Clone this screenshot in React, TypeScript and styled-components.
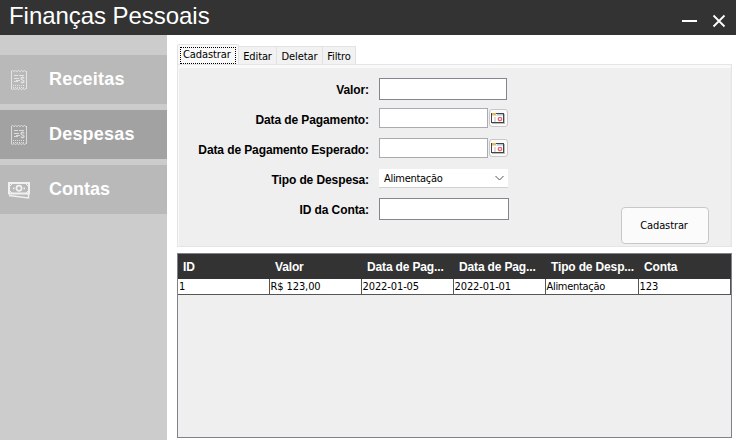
import React from "react";
import styled, { createGlobalStyle } from "styled-components";

const Global = createGlobalStyle`
  * { box-sizing: border-box; }
  body { margin: 0; background: #fff; overflow: hidden; }
`;
const arial = `"Liberation Sans", Arial, sans-serif`;
const tahoma = `"DejaVu Sans Condensed", "DejaVu Sans", Tahoma, sans-serif`;

const Window = styled.div`
  width: 736px;
  height: 440px;
  display: flex;
  flex-direction: column;
  font-family: ${tahoma};
  font-size: 11px;
  color: #000;
  white-space: nowrap;
`;
const TitleBar = styled.header`
  height: 35px;
  flex: none;
  display: flex;
  justify-content: space-between;
  padding: 0 10px 0 9px;
  background: #333;
`;
const Title = styled.h1`
  margin: 0;
  font: 400 24px/32px ${arial};
  letter-spacing: -0.05px;
  color: #fff;
`;
const Controls = styled.div`
  display: flex;
  gap: 14px;
  padding-top: 13px;
`;
const Body = styled.div`
  flex: 1;
  min-height: 0;
  display: flex;
`;
const Sidebar = styled.nav`
  width: 167px;
  flex: none;
  display: flex;
  flex-direction: column;
  gap: 6px;
  padding-top: 20px;
  background: #ccc;
`;
const NavItem = styled.a<{ $active?: boolean }>`
  height: 49px;
  display: flex;
  align-items: center;
  background: ${(p) => (p.$active ? "#a2a2a2" : "#b9b9b9")};
  color: #fff;
  font: 700 18px/22px ${arial};
`;
const NavIcon = styled.span`
  width: 49px;
  padding: 1px 0 0 8px;
  svg { display: block; }
`;
const NavText = styled.span<{ $spacing?: string }>`
  padding-bottom: 2px;
  letter-spacing: ${(p) => p.$spacing ?? "0.2px"};
`;
const Main = styled.main`
  flex: 1;
  min-width: 0;
  padding: 9px 4px 2px 10px;
  display: flex;
  flex-direction: column;
`;
const Tabs = styled.div`
  height: 20px;
  flex: none;
  display: flex;
  align-items: flex-end;
`;
const Tab = styled.div<{ $w: number }>`
  width: ${(p) => p.$w}px;
  height: 18px;
  border: 1px solid #e3e3e3;
  border-left: 0;
  border-bottom: 0;
  background: #f2f2f2;
  text-align: center;
  line-height: 19px;
  letter-spacing: -0.1px;
`;
const ActiveTab = styled.div`
  width: 62px;
  height: 20px;
  padding: 2px;
  border: 1px solid #e3e3e3;
  border-bottom: 0;
  border-radius: 2px 2px 0 0;
  background: #f9f9f9;
`;
const Focus = styled.div`
  height: 17px;
  width: 56px;
  padding-left: 2px;
  border: 1px dotted #000;
  line-height: 14px;
  letter-spacing: -0.1px;
`;
const Pane = styled.section`
  height: 183px;
  flex: none;
  display: flex;
  border: 1px solid #e5e5e5;
  background: #efefef;
  box-shadow: inset 0 3px #f9f9f9, inset 1px 0 #f9f9f9, inset -1px 0 #ededed;
`;
const Form = styled.form`
  padding-top: 9px;
  flex: 1;
`;
const Row = styled.div`
  height: 30px;
  display: grid;
  grid-template-columns: 191px 1fr;
  column-gap: 10px;
`;
const Label = styled.label`
  text-align: right;
  font: 700 12px/33px ${arial};
  letter-spacing: -0.1px;
`;
const Controlset = styled.div`
  display: flex;
  gap: 1px;
  padding-top: 4px;
`;
const Input = styled.input<{ $w: number; $soft?: boolean }>`
  width: ${(p) => p.$w}px;
  height: ${(p) => (p.$soft ? 20 : 22)}px;
  padding: 0 4px;
  border: 1px solid ${(p) => (p.$soft ? "#aaaab0" : "#83858f")};
  border-radius: 0;
  background: #fff;
  font: inherit;
`;
const DateButton = styled.button`
  width: 19px;
  height: 18px;
  margin-top: 1px;
  padding: 3px 0 0 1px;
  display: flex;
  align-items: flex-start;
  border: 1px solid #c8c8c8;
  border-radius: 3px;
  background: #fbfbfb;
  svg { display: block; flex: none; }
`;
const Combo = styled.div`
  width: 129px;
  height: 19px;
  margin-top: 1px;
  padding: 0 4px 0 5px;
  display: flex;
  align-items: center;
  justify-content: space-between;
  border-bottom: 1px solid #d2d2d2;
  background: #fff;
  letter-spacing: -0.3px;
`;
const Submit = styled.button`
  width: 88px;
  height: 37px;
  align-self: flex-end;
  margin: 0 22px 2px 0;
  padding: 0 2px 0 0;
  border: 1px solid #c8c8c8;
  border-radius: 4px;
  background: #fbfbfb;
  color: #000;
  font: 11px ${tahoma};
  letter-spacing: -0.1px;
`;
const TableBox = styled.div`
  flex: 1;
  margin-top: 6px;
  border: 1px solid #7f818b;
  background: #efefef;
`;
const Table = styled.table`
  width: 553px;
  table-layout: fixed;
  border-collapse: separate;
  border-spacing: 0;
`;
const Th = styled.th<{ $w: number }>`
  width: ${(p) => p.$w}px;
  height: 25px;
  padding: 1px 0 0 5px;
  background: #333;
  color: #fff;
  text-align: left;
  font: 700 12px/20px ${arial};
  letter-spacing: -0.15px;
`;
const Td = styled.td`
  height: 16px;
  padding: 0 0 0 1px;
  border-right: 1px solid #555;
  border-bottom: 1px solid #555;
  background: #fff;
  line-height: 15px;
  letter-spacing: -0.1px;
  &:nth-child(n + 2) { padding-left: 0.5px; }
  &:nth-child(5) { letter-spacing: -0.3px; }
`;

const ReceiptIcon = () => (
  <svg width="22" height="22" viewBox="0 0 22 22" fill="none" stroke="#fff" opacity=".62">
    <path d="M3.5 2v18M18.5 2v18" />
    <path d="M3 2.5l1.5-1 1.5 1 1.5-1 1.5 1 1.5-1 1.5 1 1.5-1 1.5 1 1.5-1 1.5 1M3 19.5l1.5 1 1.5-1 1.5 1 1.5-1 1.5 1 1.5-1 1.5 1 1.5-1 1.5 1 1.5-1" />
    <path d="M6 6.5h4M11 6.5h5M6 9.5h5M8 11.5h4M6 12.5h4" />
    <path d="M16 9.5q0-1-1.5-1t-1.5 1 1.5 1.5 1.5 1.5-1.5 1-1.5-1M14.5 7.5v1M14.5 13.5v1" strokeWidth="1.3" />
    <path d="M5 16.5h12M5 18.5h12" strokeDasharray="1 1" />
  </svg>
);
const MoneyIcon = () => (
  <svg width="22" height="22" viewBox="0 0 22 22" fill="none" stroke="#fff" opacity=".8">
    <path d="M1 4h20v10.5H1z" strokeWidth="2" />
    <path d="M2 7l2-2M20 7l-2-2M2 12l2 2M20 12l-2 2" />
    <circle cx="11" cy="9.3" r="2.6" strokeWidth="1.7" />
    <path d="M5 9.3h1.5M15.5 9.3H17" strokeWidth="1.7" />
    <path d="M1 16.5l19.5 2.5v-4" strokeWidth="1.5" />
  </svg>
);
const CalendarIcon = () => (
  <svg width="14" height="12" viewBox="0 0 14 12" shapeRendering="crispEdges">
    <path fill="#bbb" d="M1 10h13v1H1zM13 1h1v10h-1z" />
    <path fill="#444" d="M0 0h13v10H0z" />
    <path fill="#fff" d="M1 1h11v8H1z" />
    <path fill="#edb84f" d="M1 0h4v2H1z" />
    <path fill="#9bcdf5" d="M6 1h6v1H6z" />
    <path fill="#ddd" d="M3 4h2v5H3zM1 2h11v1H1z" />
    <circle cx="9" cy="6" r="1.7" fill="#fff" stroke="#e86464" strokeWidth="1.3" shapeRendering="auto" />
  </svg>
);

const columns = [
  { title: "ID", width: 92 },
  { title: "Valor", width: 92 },
  { title: "Data de Pag...", width: 92 },
  { title: "Data de Pag...", width: 92 },
  { title: "Tipo de Desp...", width: 93 },
  { title: "Conta", width: 92 },
];
const record = ["1", "R$ 123,00", "2022-01-05", "2022-01-01", "Alimentação", "123"];

export default function App() {
  return (
    <Window>
      <Global />
      <TitleBar>
        <Title>Finanças Pessoais</Title>
        <Controls>
          <svg width="16" height="16"><path d="M0 8h15" stroke="#fff" strokeWidth="2" /></svg>
          <svg width="14" height="16"><path d="M1.5 2.5l11 11M12.5 2.5l-11 11" stroke="#fff" strokeWidth="1.8" /></svg>
        </Controls>
      </TitleBar>
      <Body>
        <Sidebar>
          <NavItem><NavIcon><ReceiptIcon /></NavIcon><NavText>Receitas</NavText></NavItem>
          <NavItem $active><NavIcon><ReceiptIcon /></NavIcon><NavText>Despesas</NavText></NavItem>
          <NavItem><NavIcon><MoneyIcon /></NavIcon><NavText $spacing="0">Contas</NavText></NavItem>
        </Sidebar>
        <Main>
          <Tabs>
            <ActiveTab><Focus>Cadastrar</Focus></ActiveTab>
            <Tab $w={38}>Editar</Tab>
            <Tab $w={46}>Deletar</Tab>
            <Tab $w={33}>Filtro</Tab>
          </Tabs>
          <Pane>
            <Form>
              <Row>
                <Label>Valor:</Label>
                <Controlset><Input $w={128} /></Controlset>
              </Row>
              <Row>
                <Label>Data de Pagamento:</Label>
                <Controlset><Input $w={109} $soft /><DateButton type="button"><CalendarIcon /></DateButton></Controlset>
              </Row>
              <Row>
                <Label>Data de Pagamento Esperado:</Label>
                <Controlset><Input $w={109} $soft /><DateButton type="button"><CalendarIcon /></DateButton></Controlset>
              </Row>
              <Row>
                <Label>Tipo de Despesa:</Label>
                <Controlset>
                  <Combo>
                    Alimentação
                    <svg width="9" height="6" fill="none" stroke="#555"><path d="M.5 1l4 4 4-4" /></svg>
                  </Combo>
                </Controlset>
              </Row>
              <Row>
                <Label>ID da Conta:</Label>
                <Controlset><Input $w={130} /></Controlset>
              </Row>
            </Form>
            <Submit type="button">Cadastrar</Submit>
          </Pane>
          <TableBox>
            <Table>
              <thead>
                <tr>{columns.map((c, i) => <Th key={i} $w={c.width}>{c.title}</Th>)}</tr>
              </thead>
              <tbody>
                <tr>{record.map((c, i) => <Td key={i}>{c}</Td>)}</tr>
              </tbody>
            </Table>
          </TableBox>
        </Main>
      </Body>
    </Window>
  );
}
